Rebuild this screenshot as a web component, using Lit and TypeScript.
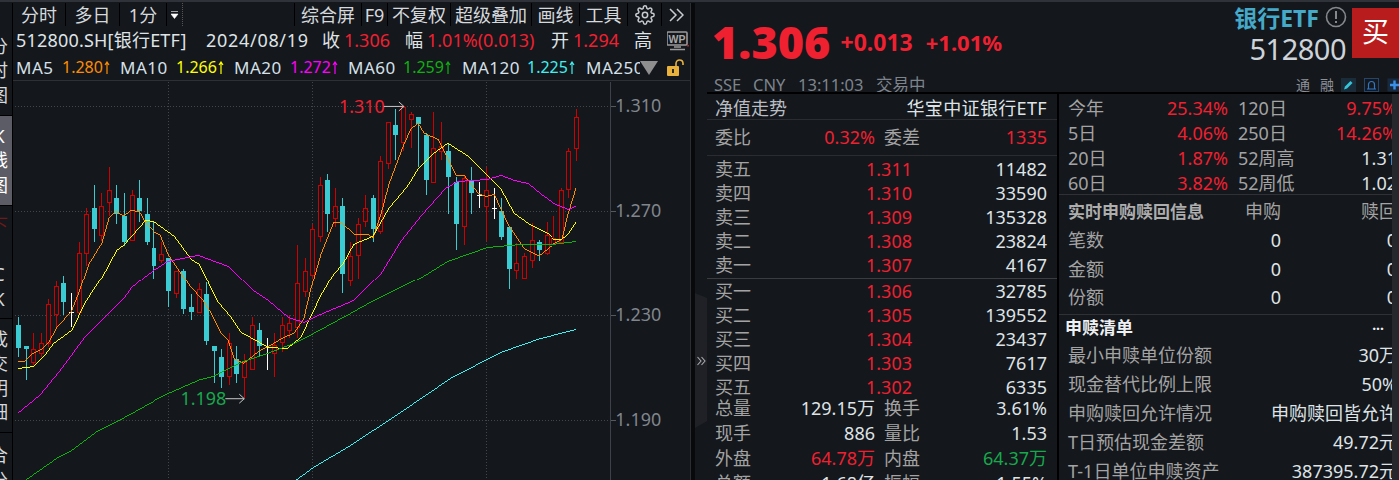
import { LitElement, html, css, svg } from "lit";
import { customElement } from "lit/decorators.js";

const RED = "#ef2030";
const GREEN = "#18a84c";
const C_RED = "#d00000";
const C_CYAN = "#3accd2";

// kind, bodyTop, bodyBottom, wickTop, wickBottom
type C = [string, number, number, number, number];
const candles: C[] = [
  ["c",325,348,317,357],["c",346,349,346,380],["r",349,362,333,365],["r",343,353,333,357],["r",304,343,299,347],
  ["r",286,314,281,327],["c",283,302,275,315],["w",312,312,293,327],["r",252,312,241,315],["r",213,252,207,265],
  ["c",207,228,184,241],["r",205,234,192,240],["r",189,201,166,215],["c",197,213,184,223],["c",215,241,192,245],
  ["r",194,239,189,240],["c",197,210,179,221],["c",213,241,197,244],["c",247,265,220,278],["r",253,259,241,262],
  ["c",257,291,257,307],["r",270,293,270,298],["c",270,309,268,314],["c",307,312,294,320],["r",289,312,283,313],
  ["c",294,341,282,345],["c",346,351,346,383],["c",357,377,349,388],["r",343,376,333,385],["c",359,374,346,383],
  ["r",362,377,354,398],["r",325,369,317,369],["c",330,346,323,357],["w",347,347,338,370],["r",345,353,333,377],
  ["r",325,342,317,352],["r",323,330,315,338],["r",283,327,244,338],["r",270,291,257,297],["r",228,274,223,278],
  ["r",184,235,176,241],["c",179,213,173,231],["r",205,217,187,226],["c",205,273,197,293],["r",255,280,241,286],
  ["r",223,254,217,278],["r",207,220,194,226],["c",197,228,194,241],["r",160,230,155,233],["r",121,162,121,168],
  ["c",124,134,108,159],["r",106,141,106,150],["r",113,118,111,147],["c",116,123,116,166],["c",134,179,132,194],
  ["r",147,181,111,181],["r",145,150,121,159],["c",150,176,142,213],["c",181,223,176,249],["r",177,225,175,244],
  ["c",179,192,166,213],["w",194,194,181,207],["r",189,205,166,240],["w",207,207,187,218],["c",210,236,197,239],
  ["c",226,268,226,289],["r",262,269,242,278],["r",255,277,252,278],["r",239,259,222,267],["c",241,249,239,260],
  ["r",234,252,221,254],["r",237,243,215,244],["r",189,241,187,243],["r",150,188,147,197],["r",116,147,108,160],
];

const lines: { color: string; pts: string }[] = [
  { color: "#ff8c00", pts: "16,361 23,361 31,353 40,349 47,342 55,327 69,312 77,292 87,263 100,242 107,217 114,210 122,215 129,209 137,210 144,222 152,230 159,234 167,253 178,270 190,287 202,300 210,313 220,333 227,340 233,358 243,363 258,351 273,343 283,337 293,333 303,318 310,288 320,253 333,221 340,221 353,233 367,233 372,237 380,213 388,183 403,143 410,128 417,122 423,132 437,138 448,160 455,174 463,174 477,192 485,195 493,193 507,223 523,247 538,255 553,243 562,238 568,213 576,187" },
  { color: "#ffff00", pts: "16,368 32,366 43,355 52,343 70,330 83,303 93,287 100,277 115,249 122,244 144,219 152,220 173,235 190,258 198,263 217,302 230,317 240,332 267,347 287,348 300,337 320,295 333,273 342,263 353,243 372,235 388,207 400,193 408,183 417,168 433,152 447,142 467,155 487,175 500,188 513,212 527,222 547,232 553,238 562,238 568,233 576,221" },
  { color: "#ff00ff", pts: "16,413 38,395 57,372 83,337 110,310 122,298 130,287 147,273 167,260 197,254 227,265 240,278 252,290 267,300 287,317 303,322 320,314 353,300 380,273 400,240 420,215 445,187 457,180 487,178 500,174 513,179 527,182 540,193 553,202 568,208 576,205" },
  { color: "#10b010", pts: "16,484 25,479 55,458 70,450 97,430 123,417 163,395 200,379 213,376 240,362 267,353 293,343 313,333 350,313 373,300 420,277 447,260 487,246 520,243 553,243 576,240" },
  { color: "#40f0f0", pts: "295,480 313,467 350,445 400,412 450,378 500,352 540,338 576,329" },
];

// Draw a polyline as one-pixel column runs so it stays aliased like the reference chart.
function stairPath(pts: string): string {
  const p = pts.split(" ").map((s) => s.split(",").map(Number));
  const yAt = (x: number) => {
    for (let i = 1; i < p.length; i++) {
      if (x <= p[i][0]) {
        const [x0, y0] = p[i - 1];
        const [x1, y1] = p[i];
        return Math.round(y0 + ((y1 - y0) * (x - x0)) / (x1 - x0));
      }
    }
    return p[p.length - 1][1];
  };
  let d = "";
  for (let x = p[0][0]; x < p[p.length - 1][0]; x++) {
    const a = yAt(x);
    const b = yAt(x + 1);
    const top = Math.min(a, b);
    const h = Math.max(Math.abs(b - a), 1);
    d += `M${x} ${top}h1v${h}h-1z`;
  }
  return d;
}

const GEAR = "M19.4 15a1.65 1.65 0 0 0 .33 1.82l.06.06a2 2 0 0 1 0 2.83 2 2 0 0 1-2.83 0l-.06-.06a1.65 1.65 0 0 0-1.82-.33 1.65 1.65 0 0 0-1 1.51V21a2 2 0 0 1-2 2 2 2 0 0 1-2-2v-.09A1.65 1.65 0 0 0 9 19.4a1.65 1.65 0 0 0-1.82.33l-.06.06a2 2 0 0 1-2.83 0 2 2 0 0 1 0-2.83l.06-.06a1.65 1.65 0 0 0 .33-1.82 1.65 1.65 0 0 0-1.51-1H3a2 2 0 0 1-2-2 2 2 0 0 1 2-2h.09A1.65 1.65 0 0 0 4.6 9a1.65 1.65 0 0 0-.33-1.82l-.06-.06a2 2 0 0 1 0-2.83 2 2 0 0 1 2.83 0l.06.06a1.65 1.65 0 0 0 1.82.33H9a1.65 1.65 0 0 0 1-1.51V3a2 2 0 0 1 2-2 2 2 0 0 1 2 2v.09a1.65 1.65 0 0 0 1 1.51 1.65 1.65 0 0 0 1.82-.33l.06-.06a2 2 0 0 1 2.83 0 2 2 0 0 1 0 2.83l-.06.06a1.65 1.65 0 0 0-.33 1.82V9a1.65 1.65 0 0 0 1.51 1H21a2 2 0 0 1 2 2 2 2 0 0 1-2 2h-.09a1.65 1.65 0 0 0-1.51 1z";

const tabs: [string, number][] = [["分时", 54], ["多日", 54], ["1分", 47]];
const tabsR: [string, number][] = [["综合屏", 67], ["F9", 26], ["不复权", 63], ["超级叠加", 81], ["画线", 48], ["工具", 48]];

const info: [string, string, number, number][] = [
  ["512800.SH[银行ETF]", "", 190, .2], ["2024/08/19", "", 116, .7], ["收", "", 22, 0], ["1.306", RED, 61, 0],
  ["幅", "", 22, 0], ["1.01%(0.013)", RED, 124, 0], ["开", "", 22, 0], ["1.294", RED, 61, 0], ["高", "", 33, 0],
];
const mas: [string, string, string, number, number][] = [
  ["MA5", "1.280", "#ff8c00", 46, 58], ["MA10", "1.266", "#ffff00", 56, 58], ["MA20", "1.272", "#ff00ff", 56, 58],
  ["MA60", "1.259", "#10b010", 55, 59], ["MA120", "1.225", "#40f0f0", 65, 59],
];

const side: { chars: string[]; cls: string }[] = [
  { chars: ["分", "时", "图"], cls: "s1" },
  { chars: ["K", "线", "图"], cls: "s2 on" },
  { chars: ["下", "\u00a0", "C", "K"], cls: "s3" },
  { chars: ["成", "交", "明", "细"], cls: "s4" },
  { chars: ["合", "分"], cls: "s5" },
];

const asks: [string, string, string][] = [["卖五", "1.311", "11482"], ["卖四", "1.310", "33590"], ["卖三", "1.309", "135328"], ["卖二", "1.308", "23824"], ["卖一", "1.307", "4167"]];
const bids: [string, string, string][] = [["买一", "1.306", "32785"], ["买二", "1.305", "139552"], ["买三", "1.304", "23437"], ["买四", "1.303", "7617"], ["买五", "1.302", "6335"]];
const stats: [string, string, string, string, string, string][] = [
  ["总量", "129.15万", "", "换手", "3.61%", ""],
  ["现手", "886", "", "量比", "1.53", ""],
  ["外盘", "64.78万", RED, "内盘", "64.37万", GREEN],
  ["总额", "1.68亿", "", "振幅", "1.55%", ""],
];
const perf: [string, string, string, string, string][] = [
  ["今年", "25.34%", "120日", "9.75%", RED],
  ["5日", "4.06%", "250日", "14.26%", RED],
  ["20日", "1.87%", "52周高", "1.31", ""],
  ["60日", "3.82%", "52周低", "1.02", ""],
];
const subs = ["笔数", "金额", "份额"];
const list: [string, string][] = [
  ["最小申赎单位份额", "30万"], ["现金替代比例上限", "50%"], ["申购赎回允许情况", "申购赎回皆允许"],
  ["T日预估现金差额", "49.72元"], ["T-1日单位申赎资产", "387395.72元"],
];

@customElement("app-root")
export class AppRoot extends LitElement {
  static styles = css`
    :host { display: block; width: 1399px; height: 480px; overflow: hidden; background: #14171c; color: #dfe3e6;
      font-family: "Noto Sans", "Noto Sans CJK SC", sans-serif; font-size: 18px; }
    * { box-sizing: border-box; }
    .strip { height: 3px; background: #14171c; border-top: 2px solid #2f3238; }
    .main { display: flex; height: 477px; }
    .left { width: 691px; flex: none; border-right: 1px solid #2b2d32; overflow: hidden; }
    .gut { width: 4px; flex: none; background: #08090b; }
    .tabs { display: flex; height: 23px; align-items: center; padding-left: 12px; background: #14171c; }
    .tab { height: 23px; line-height: 24px; text-align: center; border-right: 1px solid #000; color: #d5d9dc; white-space: nowrap; flex: none; }
    .tab.first { border-left: 1px solid #000; }
    .drop { width: 16px; height: 23px; flex: none; border-right: 1px dotted #555; display: flex; align-items: center; justify-content: center; }
    .sp { flex: 1; border-right: 1px solid #000; height: 23px; }
    .tabic { height: 23px; flex: none; display: flex; align-items: center; justify-content: center; border-right: 1px solid #000; }
    .lbody { display: flex; height: 454px; }
    .side { width: 13px; flex: none; border-right: 1px solid #000; display: flex; flex-direction: column; overflow: hidden; background: #14171c; }
    .sec { display: flex; flex-direction: column; justify-content: center; border-bottom: 1px solid #000; flex: none; overflow: hidden; }
    .sec span { display: block; width: 18px; margin-left: -10px; text-align: center; line-height: 24.5px; height: 24.5px; color: #d5d9dc; flex: none; }
    .s1 { height: 90px; }
    .s2 { height: 90px; background: #5c5c66; }
    .s2 span { color: #fff; }
    .s3 { height: 113px; }
    .s3 span:first-child { color: #6e1a1a; }
    .s4 { height: 114px; }
    .s5 { flex: 1; justify-content: flex-start; padding-top: 10px; border: 0; }
    .lmain { width: 678px; flex: none; }
    .row { display: flex; height: 27px; padding-top: 2px; line-height: 25px; align-items: center; white-space: nowrap; padding-left: 3px; }
    .row > span { flex: none; display: block; }
    .ma { font-size: 16px; }
    .ma .lb { font-size: 17px; letter-spacing: .5px; color: #d5e0ea; }
    .ma .vl { display: flex; align-items: center; }
    .ma svg { display: block; margin-left: 1px; }
    .clip { width: 54px; overflow: hidden; font-size: 17px; letter-spacing: .5px; color: #d5e0ea; }
    .tri { width: 0; height: 0; border-left: 9px solid transparent; border-right: 9px solid transparent; border-top: 14px solid #8f8f8f; flex: none; }
    .ic { display: block; flex: none; }
    .chart { display: block; width: 678px; height: 400px; border-top: 1px solid #2e3035; shape-rendering: crispEdges; }
    .chart text { shape-rendering: auto; font-family: "Noto Sans", sans-serif; font-size: 18px; }

    .right { flex: 1; position: relative; display: flex; flex-direction: column; min-width: 0; }
    .handle { position: absolute; left: 0; top: 290px; width: 12px; height: 135px; }
    .rhead { height: 89px; margin-left: 12px; display: flex; justify-content: space-between; overflow: hidden; }
    .hl { padding: 17px 0 0 5px; }
    .big { display: flex; align-items: center; height: 44px; color: #ef2030; font-weight: 700; white-space: nowrap; }
    .big b { font-size: 45px; line-height: 44px; margin-right: 10px; }
    .big i { font-style: normal; font-size: 23px; margin-right: 13px; }
    .big i + i { font-size: 22px; }
    .meta { display: flex; margin: 11px 0 0 2px; font-size: 16.5px; line-height: 20px; color: #7d848c; white-space: nowrap; }
    .meta span { display: block; flex: none; }
    .hr { display: flex; flex-direction: column; align-items: flex-end; padding-top: 5px; }
    .hrtop { display: flex; height: 62px; }
    .hcol { display: flex; flex-direction: column; align-items: flex-end; margin-right: 6px; }
    .title { display: flex; align-items: center; height: 22px; margin: -2px -1px 2px 0; color: #45a9c9; font-weight: 700; font-size: 23px; gap: 6px; white-space: nowrap; }
    .code { height: 40px; line-height: 38px; font-size: 29px; color: #cdd3d9; letter-spacing: -.5px; }
    .buy { width: 47px; height: 50px; background: #b81c1c; color: #fff; font-size: 27px; line-height: 48px; text-align: center; }
    .tools { display: flex; align-items: center; height: 14px; margin-top: 8px; margin-right: -3px; font-size: 14px; color: #8c9097; }
    .tools span { line-height: 14px; }
    .tools svg { display: block; }
    .rbody { margin-left: 12px; display: flex; border-top: 2px solid #000; height: 388px; }
    .lc { width: 350px; flex: none; overflow: hidden; }
    .rc { width: 335px; flex: none; border-left: 2px solid #000; overflow: hidden; }
    .sb { flex: 1; background: #25272c; }
    .dim { color: #a3a3a3; }
    .up { color: #ef2030; }
    .lrow { display: flex; justify-content: space-between; padding: 0 10px 0 8px; white-space: nowrap; }
    .nav { height: 26px; line-height: 28px; border-bottom: 1px solid #2a2c31; }
    .nav .dim { color: #b9bdc2; }
    .nav .name { letter-spacing: .35px; }
    .wb { height: 36px; line-height: 35px; border-bottom: 1px solid #2a2c31; display: grid; grid-template-columns: 40px 120px 9px 48px 115px; padding-left: 8px; }
    .r { text-align: right; white-space: nowrap; }
    .book { height: 123px; padding-top: 1px; border-bottom: 1px solid #3a3c41; }
    .book2 { height: 117px; }
    .br { display: grid; grid-template-columns: 60px 137px 135px; padding-left: 8px; height: 24px; line-height: 24px; }
    .st { display: grid; grid-template-columns: 40px 120px 9px 48px 115px; padding-left: 8px; height: 25px; line-height: 25px; white-space: nowrap; }
    .perf { height: 101px; padding-top: 2px; border-bottom: 1px solid #2f3136; }
    .pr { display: grid; grid-template-columns: 50px 110px 10px 56px 103px; padding-left: 9px; height: 25px; line-height: 25px; white-space: nowrap; }
    .real { height: 120px; border-bottom: 1px solid #2f3136; }
    .rh { display: grid; grid-template-columns: 140px 73px 116px; padding-left: 9px; height: 31px; line-height: 33px; white-space: nowrap; }
    .rh b { font-size: 17px; color: #adadad; font-weight: 700; }
    .rr { display: grid; grid-template-columns: 140px 73px 116px; padding-left: 9px; height: 28.5px; line-height: 28.5px; }
    .lhead { display: flex; justify-content: space-between; padding: 0 8px 0 6px; height: 26px; line-height: 25px; font-size: 17px; font-weight: 700; color: #eef0f2; }
    .lhead i { font-style: normal; font-size: 14px; line-height: 27px; }
    .lr { display: flex; justify-content: space-between; width: 338px; padding-left: 9px; height: 29px; line-height: 29px; white-space: nowrap; }
  `;

  private candle(c: C, i: number) {
    const x = Math.round(16 + i * 7.568);
    const [k, bt, bb, wt, wb] = c;
    if (k === "w") {
      return svg`<path d="M${x + .5} ${wt}V${wb}M${x - 2} ${bt + .5}H${x + 3}" stroke="#fff" fill="none"/>`;
    }
    if (k === "c") {
      return svg`<path d="M${x + .5} ${wt}V${wb}" stroke=${C_CYAN}/><rect x=${x - 2} y=${bt} width="5" height=${bb - bt} fill=${C_CYAN}/>`;
    }
    return svg`<path d="M${x + .5} ${wt}V${bt}M${x + .5} ${bb}V${Math.max(wb, bb)}" stroke=${C_RED}/><rect x=${x - 2 + .5} y=${bt + .5} width="4" height=${bb - bt} fill="#14171c" stroke=${C_RED}/>`;
  }

  private chart() {
    const ys = [105, 210, 315, 420];
    const labels = ["1.310", "1.270", "1.230", "1.190"];
    const grid = "#42454b";
    return html`<svg class="chart" viewBox="12 80 678 400">
      ${ys.map((y) => svg`<path d="M13 ${y + .5}H610" stroke=${grid} stroke-dasharray="1 2"/><path d="M610 ${y + .5}H616" stroke="#55585e"/>`)}
      ${[167, 311, 485].map((x) => svg`<path d="M${x + .5} 81V480" stroke=${grid} stroke-dasharray="1 2"/>`)}
      <path d="M610.5 81V480" stroke="#3e4147"/>
      ${ys.map((y, i) => svg`<text x="615" y=${y + 6} fill="#80868d">${labels[i]}</text>`)}
      ${candles.map((c, i) => this.candle(c, i))}
      ${lines.map((l) => svg`<path d=${stairPath(l.pts)} fill=${l.color}/>`)}
      <text x="338" y="112" fill=${RED}>1.310</text>
      <path d="M383 105.5H403M398 101L403 105.5L398 110" stroke="#c8c8c8" fill="none" style="shape-rendering:auto"/>
      <text x="179" y="405" fill=${GREEN}>1.198</text>
      <path d="M224 398.5H243M238 394L243 398.5L238 403" stroke="#c8c8c8" fill="none" style="shape-rendering:auto"/>
    </svg>`;
  }

  private arrow() {
    return html`<svg width="6" height="13" viewBox="0 0 6 13"><path d="M3 1V13M1 4L3 1L5 4" fill="none" stroke="currentColor" stroke-width="1.2"/></svg>`;
  }

  render() {
    return html`
      <div class="strip"></div>
      <div class="main">
        <div class="left">
          <div class="tabs">
            ${tabs.map(([t, w], i) => html`<div class="tab ${i === 0 ? "first" : ""}" style="width:${w}px">${t}</div>`)}
            <div class="drop"><svg width="8" height="8" viewBox="0 0 8 8"><path d="M0 .5H7M0 3H7L3.5 7.5Z" fill="#fff" stroke="#fff" stroke-width=".6"/></svg></div>
            <div class="sp"></div>
            ${tabsR.map(([t, w]) => html`<div class="tab" style="width:${w}px">${t}</div>`)}
            <div class="tabic" style="width:34px"><svg width="20" height="20" viewBox="0 0 24 24" fill="none" stroke="#c8ccd0" stroke-width="1.8"><circle cx="12" cy="12" r="3.2"/><path d=${GEAR}/></svg></div>
            <div class="tabic" style="width:28px;border:0"><svg width="15" height="14" viewBox="0 0 15 14" fill="none" stroke="#c8ccd0" stroke-width="1.5"><path d="M1 1L7 7L1 13M8 1L14 7L8 13"/></svg></div>
          </div>
          <div class="lbody">
            <div class="side">
              ${side.map((s) => html`<div class="sec ${s.cls}">${s.chars.map((c) => html`<span>${c}</span>`)}</div>`)}
            </div>
            <div class="lmain">
              <div class="row">
                ${info.map(([t, c, w, ls]) => html`<span style="width:${w}px;color:${c || "#dfe3e6"};letter-spacing:${ls}px">${t}</span>`)}
                <svg class="ic" width="22" height="20" viewBox="0 0 22 20"><rect x="0" y="1" width="20" height="13" rx="1" fill="none" stroke="#9a9a9a" stroke-width="1.6"/><text x="10" y="12" text-anchor="middle" font-size="10.5" font-weight="700" fill="#a8a8a8" font-family="Liberation Sans, sans-serif">WP</text><path d="M7 16H14M3 18.5H18" stroke="#9a9a9a" stroke-width="1.4"/><rect x="20" y="14" width="2" height="1.5" fill="#b02020"/></svg>
              </div>
              <div class="row ma">
                ${mas.map(([l, v, c, a, b]) => html`<span class="lb" style="width:${a}px">${l}</span><span class="vl" style="width:${b}px;color:${c}">${v}${this.arrow()}</span>`)}
                <span class="clip">MA250</span>
                <div class="tri"></div>
                <svg class="ic" style="margin-left:9px" width="19" height="17" viewBox="0 0 19 17"><path d="M9 8V4.5C9 2.5 10.5 1 12.5 1S16 2.5 16 4.5V6" fill="none" stroke="#e8b23c" stroke-width="1.6"/><rect x="0" y="7" width="12" height="10" rx="1" fill="#e8b23c"/><rect x="5" y="10" width="2" height="4" fill="#2a2a2a"/></svg>
              </div>
              ${this.chart()}
            </div>
          </div>
        </div>
        <div class="gut"></div>
        <div class="right">
          <svg class="handle" viewBox="0 0 12 135"><path d="M0 0L12 5V128L0 135Z" fill="#1f2126"/><path d="M2.5 64L6 68L2.5 72M6.5 64L10 68L6.5 72" fill="none" stroke="#a8abb0" stroke-width="1.1"/></svg>
          <div class="rhead">
            <div class="hl">
              <div class="big"><b>1.306</b><i>+0.013</i><i>+1.01%</i></div>
              <div class="meta"><span style="width:39px">SSE</span><span style="width:45px">CNY</span><span style="width:78px">13:11:03</span><span>交易中</span></div>
            </div>
            <div class="hr">
              <div class="hrtop">
                <div class="hcol">
                  <div class="title"><span>银行ETF</span>
                    <svg width="22" height="22" viewBox="0 0 22 22"><circle cx="11" cy="11" r="9.5" fill="none" stroke="#85898e" stroke-width="1.6"/><rect x="10" y="5" width="2" height="8" fill="#85898e"/><rect x="10" y="15" width="2" height="2" fill="#85898e"/></svg>
                  </div>
                  <div class="code">512800</div>
                </div>
                <div class="buy">买</div>
              </div>
              <div class="tools">
                <span>通</span><span style="margin-left:10px">融</span>
                <svg style="margin-left:7px" width="15" height="14" viewBox="0 0 15 14"><rect width="15" height="14" fill="#1a2c3a"/><path d="M3 11.5L4 8.5L9.5 3L11.5 5L6 10.5Z" fill="#35c4d8"/></svg>
                <svg style="margin-left:8px" width="15" height="14" viewBox="0 0 15 14"><rect x=".5" y=".5" width="14" height="13" fill="none" stroke="#24466e"/><path d="M3 11H12M4.5 11V6.5A3 3 0 0 1 10.5 6.5V11" fill="none" stroke="#2f78c8" stroke-width="1.2"/></svg>
                <svg style="margin-left:8px" width="15" height="14" viewBox="0 0 15 14"><rect x=".5" y=".5" width="14" height="13" fill="#182a40"/><path d="M7.5 2.5V11.5M3 7H12" stroke="#3a90e8" stroke-width="2.4"/></svg>
              </div>
            </div>
          </div>
          <div class="rbody">
            <div class="lc">
              <div class="lrow nav"><span class="dim">净值走势</span><span class="name">华宝中证银行ETF</span></div>
              <div class="wb"><span class="dim">委比</span><span class="r up">0.32%</span><span></span><span class="dim">委差</span><span class="r up">1335</span></div>
              <div class="book">${asks.map(([l, p, v]) => html`<div class="br"><span class="dim">${l}</span><span class="r up">${p}</span><span class="r">${v}</span></div>`)}</div>
              <div class="book2">${bids.map(([l, p, v]) => html`<div class="br"><span class="dim">${l}</span><span class="r up">${p}</span><span class="r">${v}</span></div>`)}</div>
              ${stats.map(([a, b, c, d, e, f]) => html`<div class="st"><span class="dim">${a}</span><span class="r" style="color:${c || "inherit"}">${b}</span><span></span><span class="dim">${d}</span><span class="r" style="color:${f || "inherit"}">${e}</span></div>`)}
            </div>
            <div class="rc">
              <div class="perf">${perf.map(([a, b, c, d, k]) => html`<div class="pr"><span class="dim">${a}</span><span class="r up">${b}</span><span></span><span class="dim">${c}</span><span class="r" style="color:${k || "inherit"}">${d}</span></div>`)}</div>
              <div class="real">
                <div class="rh"><b>实时申购赎回信息</b><span class="r dim">申购</span><span class="r dim">赎回</span></div>
                ${subs.map((s) => html`<div class="rr"><span class="dim">${s}</span><span class="r">0</span><span class="r">0</span></div>`)}
              </div>
              <div class="lhead"><span>申赎清单</span><i>···</i></div>
              ${list.map(([a, b]) => html`<div class="lr"><span class="dim">${a}</span><span>${b}</span></div>`)}
            </div>
            <div class="sb"></div>
          </div>
        </div>
      </div>
    `;
  }
}
